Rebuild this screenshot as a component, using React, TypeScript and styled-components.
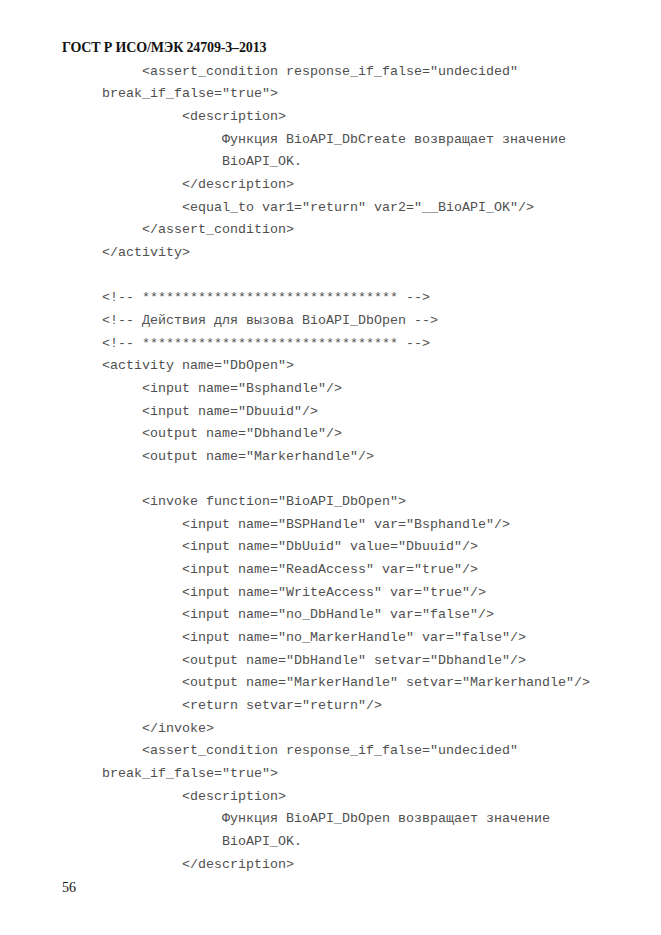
import React from "react";
import styled, { createGlobalStyle } from "styled-components";

const Global = createGlobalStyle`
  html, body { margin: 0; padding: 0; background: #ffffff; }
  #root { width: 661px; min-height: 935px; }
`;

const Page = styled.div`
  width: 661px;
  height: 935px;
  box-sizing: border-box;
  padding: 37px 0 0 62px;
  display: flex;
  flex-direction: column;
  background: #ffffff;
`;

const Header = styled.div`
  font-family: "Liberation Serif", "Times New Roman", serif;
  font-weight: bold;
  font-size: 14px;
  letter-spacing: -0.15px;
  line-height: 22.66px;
  height: 23.66px;
  color: #111;
`;

const Code = styled.div`
  margin-left: 40px;
  display: flex;
  flex-direction: column;
`;

const Line = styled.div<{ $level: number }>`
  font-family: "Liberation Mono", "Courier New", monospace;
  font-size: 13.33px;
  line-height: 22.66px;
  height: 22.66px;
  white-space: pre;
  color: #505050;
  padding-left: ${(p) => p.$level * 40}px;
`;

const PageNumber = styled.div`
  font-family: "Liberation Serif", "Times New Roman", serif;
  font-size: 14px;
  line-height: 22.66px;
  margin-top: 1px;
  color: #111;
`;

const lines: [number, string][] = [
  [1, '<assert_condition response_if_false="undecided"'],
  [0, 'break_if_false="true">'],
  [2, "<description>"],
  [3, "Функция BioAPI_DbCreate возвращает значение"],
  [3, "BioAPI_OK."],
  [2, "</description>"],
  [2, '<equal_to var1="return" var2="__BioAPI_OK"/>'],
  [1, "</assert_condition>"],
  [0, "</activity>"],
  [0, ""],
  [0, "<!-- ******************************** -->"],
  [0, "<!-- Действия для вызова BioAPI_DbOpen -->"],
  [0, "<!-- ******************************** -->"],
  [0, '<activity name="DbOpen">'],
  [1, '<input name="Bsphandle"/>'],
  [1, '<input name="Dbuuid"/>'],
  [1, '<output name="Dbhandle"/>'],
  [1, '<output name="Markerhandle"/>'],
  [0, ""],
  [1, '<invoke function="BioAPI_DbOpen">'],
  [2, '<input name="BSPHandle" var="Bsphandle"/>'],
  [2, '<input name="DbUuid" value="Dbuuid"/>'],
  [2, '<input name="ReadAccess" var="true"/>'],
  [2, '<input name="WriteAccess" var="true"/>'],
  [2, '<input name="no_DbHandle" var="false"/>'],
  [2, '<input name="no_MarkerHandle" var="false"/>'],
  [2, '<output name="DbHandle" setvar="Dbhandle"/>'],
  [2, '<output name="MarkerHandle" setvar="Markerhandle"/>'],
  [2, '<return setvar="return"/>'],
  [1, "</invoke>"],
  [1, '<assert_condition response_if_false="undecided"'],
  [0, 'break_if_false="true">'],
  [2, "<description>"],
  [3, "Функция BioAPI_DbOpen возвращает значение"],
  [3, "BioAPI_OK."],
  [2, "</description>"],
];

export default function App() {
  return (
    <>
      <Global />
      <Page>
        <Header>ГОСТ Р ИСО/МЭК 24709-3–2013</Header>
        <Code>
          {lines.map(([level, text], i) => (
            <Line key={i} $level={level}>
              {text}
            </Line>
          ))}
        </Code>
        <PageNumber>56</PageNumber>
      </Page>
    </>
  );
}
